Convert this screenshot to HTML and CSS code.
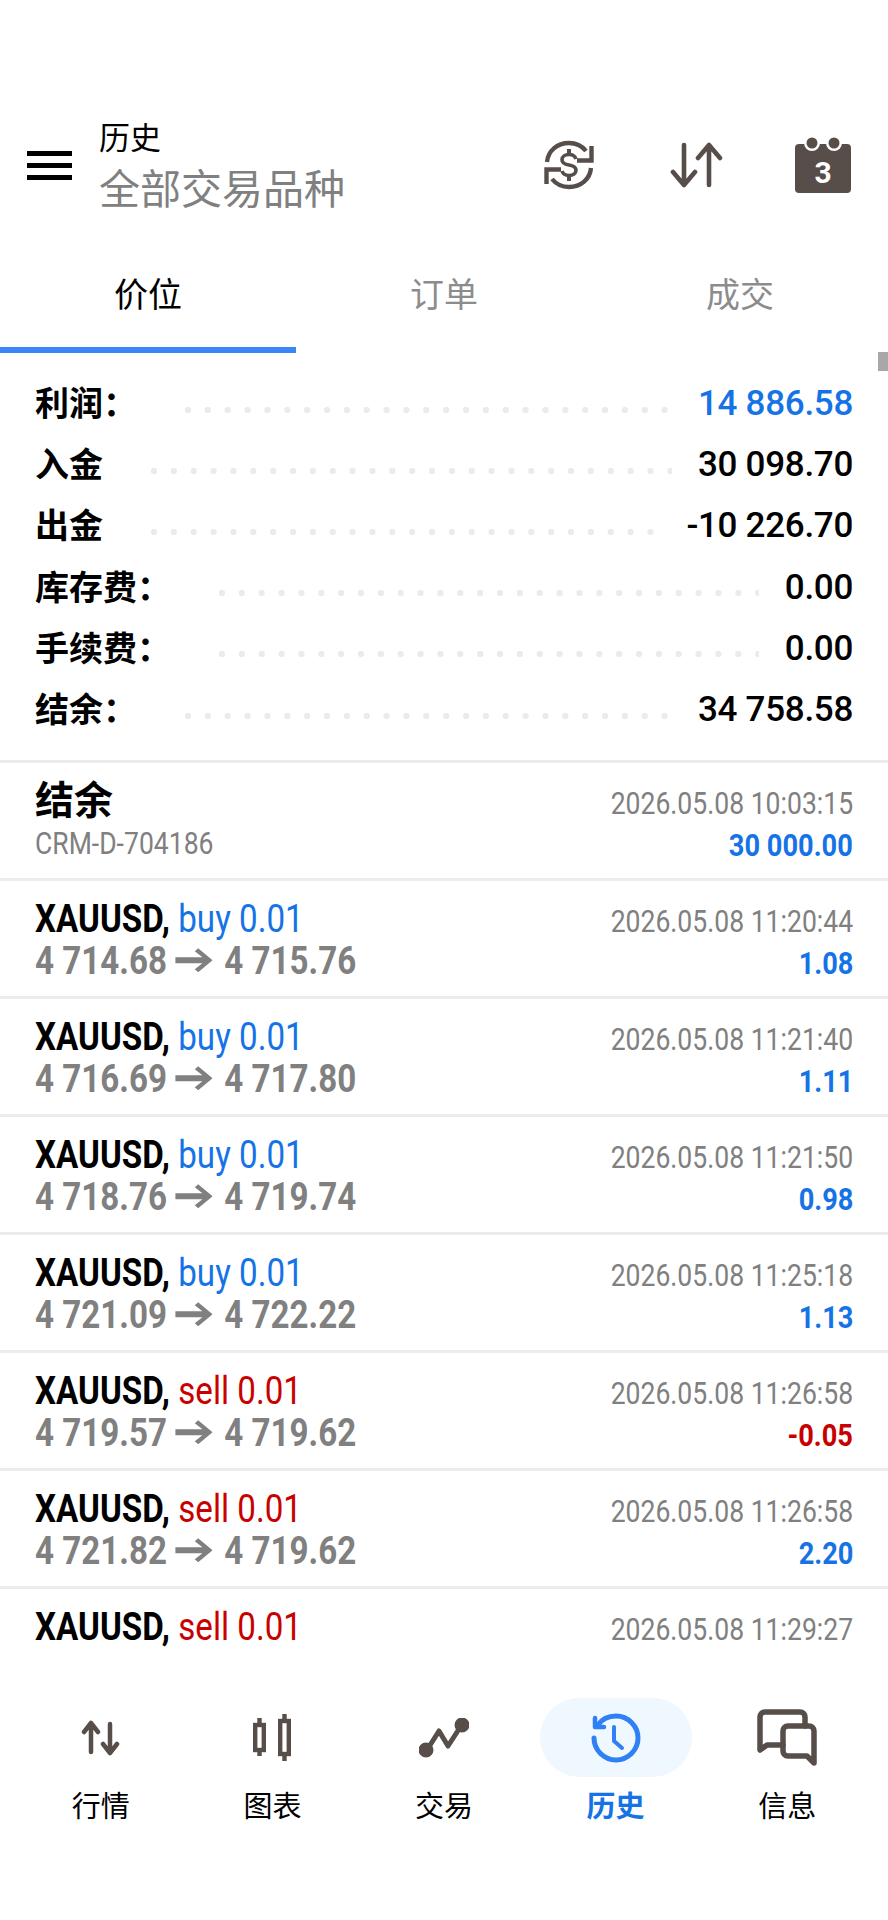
FILE: index.html
```html
<!DOCTYPE html>
<html lang="zh">
<head>
  <meta charset="UTF-8" />
  <meta name="viewport" content="width=device-width, initial-scale=1.0"/>
  <title>历史</title>
  <link rel="stylesheet" href="styles.css">
</head>
<body>
  <div class="screen">
    <header class="topbar">
      <div class="burger"><span></span><span></span><span></span></div>
      <div class="titles">
        <div class="title">历史</div>
        <div class="subtitle">全部交易品种</div>
      </div>
      <div class="actions">
        <svg class="ic-coin" viewBox="0 0 50 50" fill="none" stroke="#574e49" stroke-width="4.400">
          <path d="M3 22C4 11 13 3 25 3c7 0 13 3 17 8"/>
          <path d="M47.500 6v14.500H33"/>
          <path d="M47 28c-1 11-10 19-22 19-7 0-13-3-17-8"/>
          <path d="M2.500 44V29.500H17"/>
          <path d="M32 19c-1-3-3.500-4.500-7-4.500-4 0-7 2-7 5.200 0 3.300 3 4.600 7 5.300s7 2 7 5.300c0 3.200-3 5.200-7 5.200-3.500 0-6-1.500-7-4.500" stroke-width="3.600"/>
          <path d="M25 9v5M25 36v5" stroke-width="4"/>
        </svg>
        <svg class="ic-sort" viewBox="0 0 54 46" fill="none" stroke="#574e49" stroke-width="4.600" stroke-linecap="round" stroke-linejoin="round">
          <path d="M14 3v40M3 30l11 13 11-13"/>
          <path d="M39 43V3M28 16 39 3l11 13"/>
        </svg>
        <svg class="ic-cal" viewBox="0 0 56 56">
          <rect x="0" y="7" width="56" height="49" rx="4" fill="#574e49"/>
          <circle cx="17" cy="6" r="8" fill="#fff"/>
          <circle cx="39" cy="6" r="8" fill="#fff"/>
          <circle cx="17" cy="6" r="5.500" fill="#574e49"/>
          <circle cx="39" cy="6" r="5.500" fill="#574e49"/>
          <text x="28" y="46" class="cal-num" text-anchor="middle">3</text>
        </svg>
      </div>
    </header>

    <nav class="tabs">
      <div class="tab active">价位</div>
      <div class="tab">订单</div>
      <div class="tab">成交</div>
    </nav>
    <div class="scroll-thumb"></div>

    <section class="summary">
      <div class="sum-row"><span class="sum-label">利润：</span><i class="dots"></i><span class="sum-val blue">14 886.58</span></div>
      <div class="sum-row"><span class="sum-label">入金</span><i class="dots"></i><span class="sum-val">30 098.70</span></div>
      <div class="sum-row"><span class="sum-label">出金</span><i class="dots"></i><span class="sum-val">-10 226.70</span></div>
      <div class="sum-row"><span class="sum-label">库存费：</span><i class="dots"></i><span class="sum-val">0.00</span></div>
      <div class="sum-row"><span class="sum-label">手续费：</span><i class="dots"></i><span class="sum-val">0.00</span></div>
      <div class="sum-row"><span class="sum-label">结余：</span><i class="dots"></i><span class="sum-val">34 758.58</span></div>
    </section>

    <section class="deals">
      <div class="deal">
        <div class="deal-l">
          <div class="line head-cn">结余</div>
          <div class="line"><span class="cond crm">CRM-D-704186</span></div>
        </div>
        <div class="deal-r">
          <div class="line"><span class="cond date">2026.05.08 10:03:15</span></div>
          <div class="line"><span class="cond money blue">30 000.00</span></div>
        </div>
      </div>
      <div class="deal">
        <div class="deal-l">
          <div class="line"><span class="cond sym">XAUUSD, <em class="blue">buy 0.01</em></span></div>
          <div class="line"><span class="cond px">4 714.68 <i class="arr"></i> 4 715.76</span></div>
        </div>
        <div class="deal-r">
          <div class="line"><span class="cond date">2026.05.08 11:20:44</span></div>
          <div class="line"><span class="cond money blue">1.08</span></div>
        </div>
      </div>
      <div class="deal">
        <div class="deal-l">
          <div class="line"><span class="cond sym">XAUUSD, <em class="blue">buy 0.01</em></span></div>
          <div class="line"><span class="cond px">4 716.69 <i class="arr"></i> 4 717.80</span></div>
        </div>
        <div class="deal-r">
          <div class="line"><span class="cond date">2026.05.08 11:21:40</span></div>
          <div class="line"><span class="cond money blue">1.11</span></div>
        </div>
      </div>
      <div class="deal">
        <div class="deal-l">
          <div class="line"><span class="cond sym">XAUUSD, <em class="blue">buy 0.01</em></span></div>
          <div class="line"><span class="cond px">4 718.76 <i class="arr"></i> 4 719.74</span></div>
        </div>
        <div class="deal-r">
          <div class="line"><span class="cond date">2026.05.08 11:21:50</span></div>
          <div class="line"><span class="cond money blue">0.98</span></div>
        </div>
      </div>
      <div class="deal">
        <div class="deal-l">
          <div class="line"><span class="cond sym">XAUUSD, <em class="blue">buy 0.01</em></span></div>
          <div class="line"><span class="cond px">4 721.09 <i class="arr"></i> 4 722.22</span></div>
        </div>
        <div class="deal-r">
          <div class="line"><span class="cond date">2026.05.08 11:25:18</span></div>
          <div class="line"><span class="cond money blue">1.13</span></div>
        </div>
      </div>
      <div class="deal">
        <div class="deal-l">
          <div class="line"><span class="cond sym">XAUUSD, <em class="red">sell 0.01</em></span></div>
          <div class="line"><span class="cond px">4 719.57 <i class="arr"></i> 4 719.62</span></div>
        </div>
        <div class="deal-r">
          <div class="line"><span class="cond date">2026.05.08 11:26:58</span></div>
          <div class="line"><span class="cond money red">-0.05</span></div>
        </div>
      </div>
      <div class="deal">
        <div class="deal-l">
          <div class="line"><span class="cond sym">XAUUSD, <em class="red">sell 0.01</em></span></div>
          <div class="line"><span class="cond px">4 721.82 <i class="arr"></i> 4 719.62</span></div>
        </div>
        <div class="deal-r">
          <div class="line"><span class="cond date">2026.05.08 11:26:58</span></div>
          <div class="line"><span class="cond money blue">2.20</span></div>
        </div>
      </div>
      <div class="deal">
        <div class="deal-l">
          <div class="line"><span class="cond sym">XAUUSD, <em class="red">sell 0.01</em></span></div>
        </div>
        <div class="deal-r">
          <div class="line"><span class="cond date">2026.05.08 11:29:27</span></div>
        </div>
      </div>
    </section>

    <nav class="bottom">
      <div class="nav-item">
        <div class="nav-ic">
          <svg width="40" height="36" viewBox="0 0 40 36" fill="none" stroke="#574e49" stroke-width="4.500" stroke-linecap="round" stroke-linejoin="round">
            <path d="M10 32V3M3 12l7-9 7 9"/>
            <path d="M29 4v29M22 24l7 9 7-9"/>
          </svg>
        </div>
        <span>行情</span>
      </div>
      <div class="nav-item">
        <div class="nav-ic">
          <svg width="38" height="47" viewBox="0 0 38 47" fill="none" stroke="#574e49" stroke-width="4.400">
            <path d="M6.500 4v38M31.500 0v47"/>
            <rect x="2.200" y="11" width="8.600" height="25" fill="#fff"/>
            <rect x="27.200" y="7" width="8.600" height="33" fill="#fff"/>
          </svg>
        </div>
        <span>图表</span>
      </div>
      <div class="nav-item">
        <div class="nav-ic">
          <svg width="50" height="40" viewBox="0 0 50 40" fill="#574e49" stroke="#574e49" stroke-width="5" stroke-linejoin="round">
            <path d="M8 32 20 13l9 15 13-20" fill="none"/>
            <circle cx="7" cy="32" r="5"/>
            <circle cx="43" cy="7" r="5"/>
          </svg>
        </div>
        <span>交易</span>
      </div>
      <div class="nav-item on">
        <div class="nav-ic">
          <svg width="50" height="50" viewBox="0 0 50 50" fill="none" stroke="#2f80f5" stroke-width="5" stroke-linecap="round" stroke-linejoin="round">
            <path d="M7 12C11 6 18 3 25 3c12 0 22 10 22 22S37 47 25 47 3 37 3 25"/>
            <path d="M4 5v9h9" stroke-width="4.500"/>
            <path d="M23 14v14l8 7" stroke-width="4"/>
          </svg>
        </div>
        <span>历史</span>
      </div>
      <div class="nav-item">
        <div class="nav-ic">
          <svg width="60" height="57" viewBox="0 0 60 57" fill="none" stroke="#574e49" stroke-width="5.500" stroke-linejoin="round" stroke-linecap="round">
            <path d="M26 36H10l-7 5V8c0-3 2-5 5-5h35c3 0 5 2 5 5v9"/>
            <path d="M31 17h21c3 0 5 2 5 5v32l-7-7H31c-3 0-5-2-5-5V22c0-3 2-5 5-5z"/>
          </svg>
        </div>
        <span>信息</span>
      </div>
    </nav>
  </div>
</body>
</html>
```

FILE: styles.css
```css
* { margin: 0; padding: 0; box-sizing: border-box; }
body {
  font-family: Roboto, "Noto Sans CJK SC", sans-serif;
  background: #fff;
  color: #000;
}

.screen {
  position: relative;
  height: 1920px;
  display: flex;
  flex-direction: column;
  overflow: hidden;
}

.blue { color: #1673e6; }
.red { color: #c80000; }

/* top bar */
.topbar {
  display: flex;
  align-items: flex-start;
  height: 212px;
  padding: 117px 37px 0 27px;
}

.burger {
  width: 45px;
  margin-top: 34px;
  display: flex;
  flex-direction: column;
  gap: 7px;
}

.burger span {
  height: 5px;
  background: #000;
}

.titles { margin-left: 27px; }
.title { font-size: 31px; line-height: 44px; }
.subtitle { font-size: 41px; line-height: 50px; margin-top: 4px; color: #808080; }

.actions {
  margin-left: auto;
  margin-top: 20px;
  display: flex;
  align-items: center;
}

.ic-coin { width: 50px; height: 50px; margin-right: 76px; }
.ic-sort { width: 54px; height: 46px; margin-right: 71px; }
.ic-cal { width: 56px; height: 56px; overflow: visible; }
.cal-num { font-size: 30px; font-weight: 700; fill: #fff; }

/* tabs */
.tabs {
  display: grid;
  grid-template-columns: repeat(3, 1fr);
  height: 141px;
}

.tab {
  padding-top: 60px;
  font-size: 34px;
  line-height: 46px;
  text-align: center;
  color: #8c8c8c;
  border-bottom: 6px solid transparent;
}

.tab.active { color: #000; border-bottom-color: #3b86f7; }

.scroll-thumb {
  position: absolute;
  right: 0;
  top: 352px;
  width: 10px;
  height: 19px;
  background: #a8a8a8;
}

/* summary */
.summary {
  padding: 19px 35px 21px 35px;
  border-bottom: 3px solid #ececec;
}

.sum-row {
  display: flex;
  align-items: center;
  height: 61.200px;
}

.sum-label { font-size: 34px; font-weight: 700; margin-top: -2px; }

.dots {
  flex: 1;
  height: 8px;
  margin: 14px 26px 0 48px;
  background: radial-gradient(ellipse 3px 3.500px at 3px 4px, #ebebeb 95%, transparent 100%) left center / 19.870px 8px repeat-x;
}

.sum-val { font-size: 35px; font-weight: 500; letter-spacing: -0.3px; margin-top: 2px; }

/* deal list */
.deals {
  flex: 1;
  min-height: 0;
  overflow: hidden;
}

.deal {
  display: flex;
  justify-content: space-between;
  height: 118px;
  padding: 14px 35px 0 35px;
  border-bottom: 3px solid #ececec;
}

.line {
  height: 42px;
  line-height: 42px;
  white-space: nowrap;
}

.deal-l .line:first-child { margin-top: 3px; }
.deal-r { text-align: right; }
.deal-r .line:first-child { margin-top: 5px; }

.cond {
  display: inline-block;
  line-height: 42px;
  transform-origin: left center;
}

.deal-r .cond { transform-origin: right center; }

.head-cn { font-size: 39px; font-weight: 700; }
.crm { font-size: 32px; color: #808080; transform: scaleX(0.83); }
.date { font-size: 32px; color: #808080; transform: scaleX(0.83); }
.money { font-size: 32px; font-weight: 700; transform: scaleX(0.85); }
.sym { font-size: 39px; font-weight: 700; transform: scaleX(0.85); }
.sym em { font-style: normal; font-weight: 400; }
.px { font-size: 39px; font-weight: 700; color: #808080; transform: scaleX(0.85); }

.arr {
  display: inline-block;
  width: 44px;
  height: 24px;
  margin-right: 4px;
  vertical-align: 2px;
  background: #808080;
  clip-path: polygon(0 9px, 32px 9px, 23px 3px, 27px 0, 44px 12px, 27px 24px, 23px 21px, 32px 15px, 0 15px);
}

/* bottom nav */
.bottom {
  height: 267px;
  flex: none;
  display: grid;
  grid-template-columns: repeat(5, 1fr);
  padding: 45px 15px 0;
  background: #fff;
}

.nav-item {
  display: flex;
  flex-direction: column;
  align-items: center;
  gap: 10px;
  font-size: 29px;
  line-height: 40px;
}

.nav-ic {
  width: 152px;
  height: 79px;
  border-radius: 40px;
  display: flex;
  align-items: center;
  justify-content: center;
}

.nav-item.on .nav-ic { background: #eff7ff; }
.nav-item.on span { color: #1673e6; font-weight: 700; }
```
